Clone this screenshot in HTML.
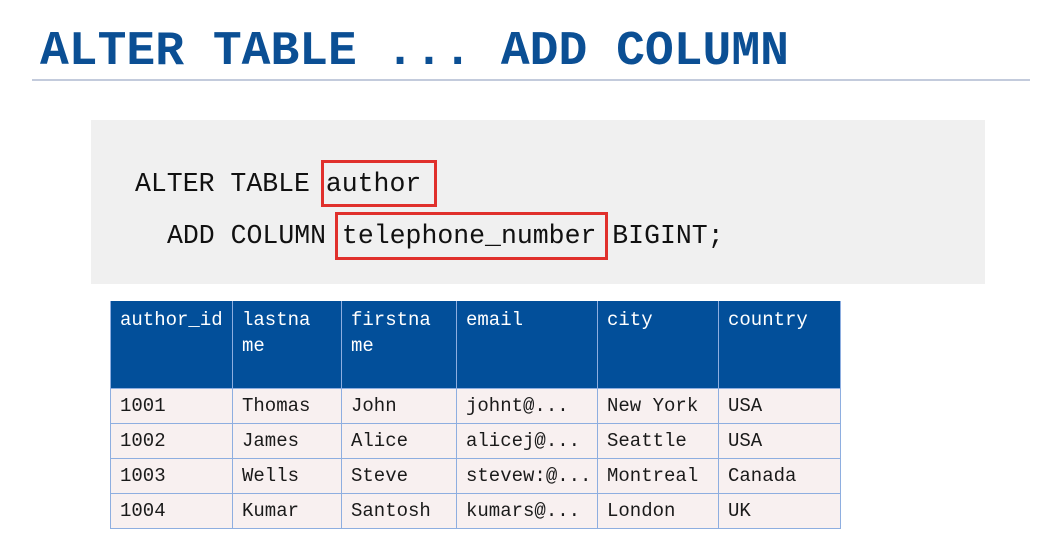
<!DOCTYPE html>
<html><head><style>
body{margin:0;width:1040px;height:549px;background:#fff;position:relative;overflow:hidden;font-family:"Liberation Mono",monospace}
.t{position:absolute;left:40px;top:24px;font-size:48px;font-weight:bold;color:#0b4f94;line-height:56px;white-space:pre}
.hr{position:absolute;left:32px;top:79px;width:998px;height:2px;background:#c3cbdc}
.box{position:absolute;left:91px;top:120px;width:894px;height:164px;background:#f0f0f0}
.c{position:absolute;font-size:26.5px;color:#111;white-space:pre;line-height:30px}
.r{position:absolute;border:3px solid #e0302c;box-sizing:border-box}
table{position:absolute;left:110px;top:301px;border-collapse:collapse;font-size:19px;table-layout:fixed;width:730px}
td{border:1.5px solid #8eaee0;padding:0 0 0 9px;height:35px;background:#f8f0f0;color:#1a1a1a;vertical-align:middle;white-space:nowrap;overflow:hidden;box-sizing:border-box}
th{background:#024f9a;color:#fff;font-weight:normal;text-align:left;vertical-align:top;height:87px;padding:6px 0 0 9px;box-sizing:border-box;border:1.5px solid #8eaee0;border-top:none;line-height:26px;font-size:19px;overflow:hidden;white-space:nowrap}
</style></head><body>
<div class="t">ALTER TABLE ... ADD COLUMN</div>
<div class="hr"></div>
<div class="box"></div>
<div class="c" style="left:135px;top:169px">ALTER TABLE author</div>
<div class="c" style="left:167px;top:221px">ADD COLUMN telephone_number BIGINT;</div>
<div class="r" style="left:321px;top:160px;width:116px;height:47px"></div>
<div class="r" style="left:335px;top:212px;width:273px;height:48px"></div>
<table>
<colgroup><col style="width:122px"><col style="width:109px"><col style="width:115px"><col style="width:141px"><col style="width:121px"><col style="width:122px"></colgroup>
<tr><th>author_id</th><th>lastna<br>me</th><th>firstna<br>me</th><th>email</th><th>city</th><th>country</th></tr>
<tr><td>1001</td><td>Thomas</td><td>John</td><td>johnt@...</td><td>New York</td><td>USA</td></tr>
<tr><td>1002</td><td>James</td><td>Alice</td><td>alicej@...</td><td>Seattle</td><td>USA</td></tr>
<tr><td>1003</td><td>Wells</td><td>Steve</td><td>stevew:@...</td><td>Montreal</td><td>Canada</td></tr>
<tr><td>1004</td><td>Kumar</td><td>Santosh</td><td>kumars@...</td><td>London</td><td>UK</td></tr>
</table>
</body></html>
